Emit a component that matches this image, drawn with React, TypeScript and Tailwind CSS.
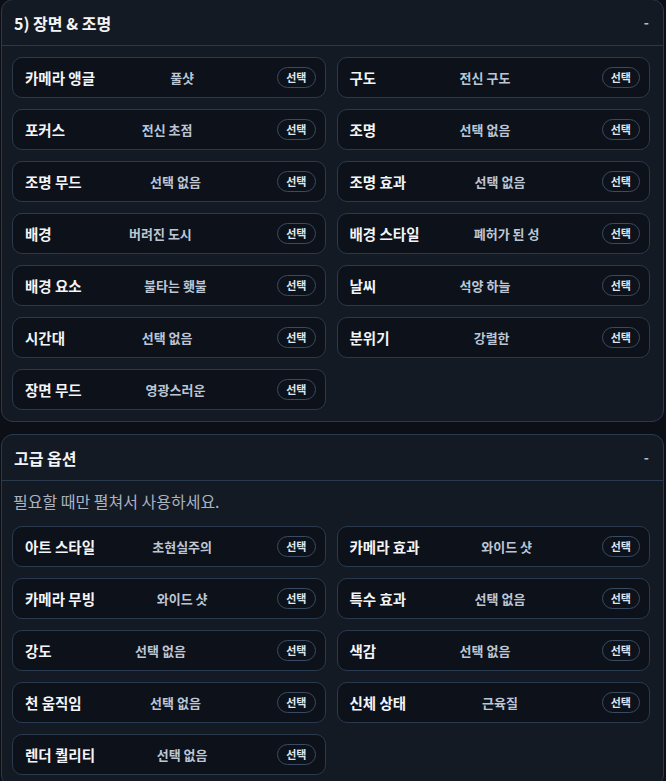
import React from 'react';

type Item = { label: string; value: string };

const SCENE: Item[] = [
  { label: '카메라 앵글', value: '풀샷' },
  { label: '구도', value: '전신 구도' },
  { label: '포커스', value: '전신 초점' },
  { label: '조명', value: '선택 없음' },
  { label: '조명 무드', value: '선택 없음' },
  { label: '조명 효과', value: '선택 없음' },
  { label: '배경', value: '버려진 도시' },
  { label: '배경 스타일', value: '폐허가 된 성' },
  { label: '배경 요소', value: '불타는 횃불' },
  { label: '날씨', value: '석양 하늘' },
  { label: '시간대', value: '선택 없음' },
  { label: '분위기', value: '강렬한' },
  { label: '장면 무드', value: '영광스러운' },
];

const ADVANCED: Item[] = [
  { label: '아트 스타일', value: '초현실주의' },
  { label: '카메라 효과', value: '와이드 샷' },
  { label: '카메라 무빙', value: '와이드 샷' },
  { label: '특수 효과', value: '선택 없음' },
  { label: '강도', value: '선택 없음' },
  { label: '색감', value: '선택 없음' },
  { label: '천 움직임', value: '선택 없음' },
  { label: '신체 상태', value: '근육질' },
  { label: '렌더 퀄리티', value: '선택 없음' },
];

const OptionCard = ({ item }: { item: Item }) => (
  <div className="h-[41px] flex items-center gap-2 pl-3 pr-[9px] rounded-[10px] border border-[#2a3a4e] bg-[#0d1119]">
    <span className="text-[14.5px] font-bold text-[#f3f5f8] whitespace-nowrap">{item.label}</span>
    <span className="flex-1 text-center pr-2 text-[13px] font-semibold text-[#bcc6d5] whitespace-nowrap">{item.value}</span>
    <button className="h-[21px] px-[8px] rounded-full border border-[#3a4c63] text-[11px] font-bold text-[#dfe6ef] leading-none">
      선택
    </button>
  </div>
);

const Panel = ({
  title,
  items,
  note,
  className = '',
}: {
  title: string;
  items: Item[];
  note?: string;
  className?: string;
}) => (
  <section className={`w-[663px] ml-px rounded-xl border border-[#2a3a4e] bg-[#141a23] ${className}`}>
    <div className="h-[46px] flex items-center justify-between pl-3 pr-[14px] border-b border-[#2a3a4e]">
      <h2 className="text-[16px] font-bold text-[#f3f5f8]">{title}</h2>
      <span className="text-[14px] font-bold text-[#a9c0dc]">-</span>
    </div>
    {note && <p className="pt-[10px] pl-[11px] text-[16px] leading-5 text-[#aab3c1]">{note}</p>}
    <div className={`grid grid-cols-2 gap-[11px] pl-[10px] pr-[13px] pb-[11px] ${note ? 'pt-[15px]' : 'pt-[11px]'}`}>
      {items.map((item) => (
        <OptionCard key={item.label} item={item} />
      ))}
    </div>
  </section>
);

export default function App() {
  return (
    <div
      className="w-[666px] h-[781px] overflow-hidden bg-[#0c1016]"
      style={{ fontFamily: '"Noto Sans CJK KR", "Noto Sans", sans-serif' }}
    >
      <Panel title="5) 장면 & 조명" items={SCENE} className="-mt-px" />
      <Panel title="고급 옵션" items={ADVANCED} note="필요할 때만 펼쳐서 사용하세요." className="mt-3" />
    </div>
  );
}
